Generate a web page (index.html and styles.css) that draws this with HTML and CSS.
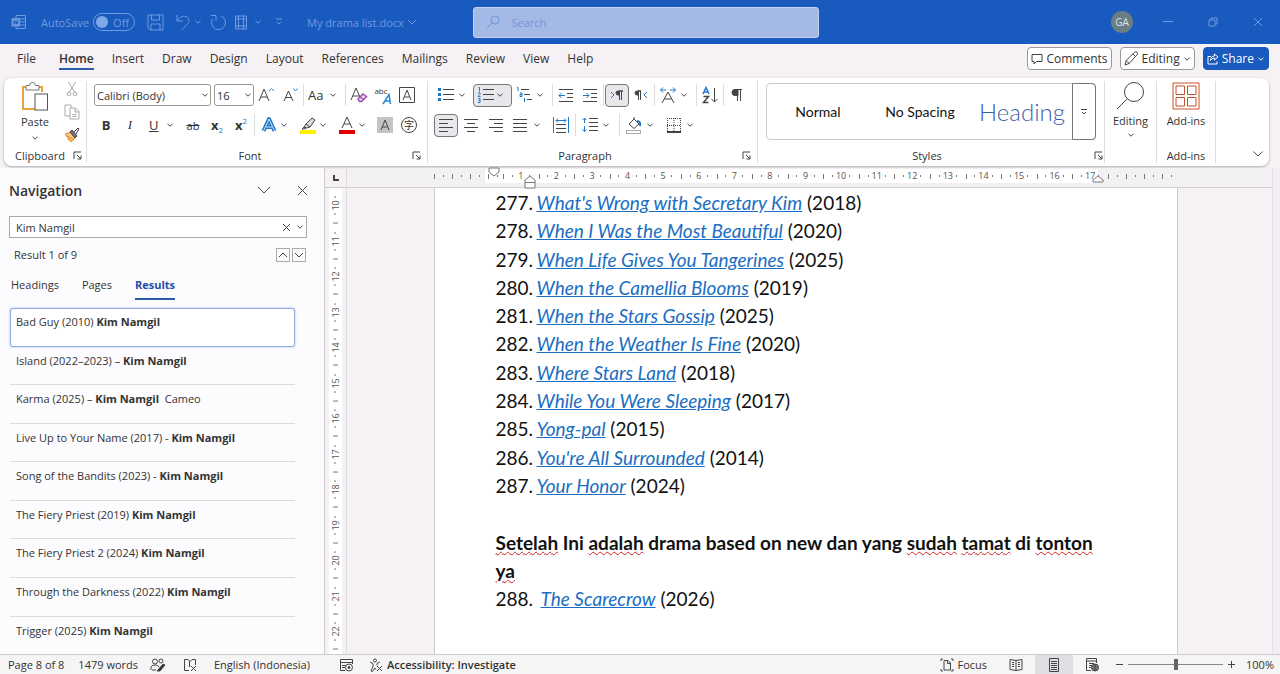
FILE: index.html
```html
<!DOCTYPE html>
<html lang="en">
  <head>
    <meta charset="UTF-8">
    <title>My drama list.docx</title>
    <link rel="stylesheet" href="styles.css">
  </head>
  <body>
    <svg class="defs" width="0" height="0">
      <symbol id="chev" viewBox="0 0 8 8"><path d="M1.5 2.8 4 5.2 6.5 2.8"/></symbol>
      <symbol id="launch" viewBox="0 0 9 9"><path d="M1 8V1h7M4 4l4 4M8 4.500V8H4.500"/></symbol>
    </svg>

    <header class="titlebar">
      <div class="quick">
        <svg class="word" width="16" height="16" viewBox="0 0 16 16"><path d="M5 4V1.500h9.500v13H5V12M5 5h9.500M9 8h5.500M9 11h5.500"/><rect x="1" y="4.500" width="7.500" height="7.500" fill="#6593dc"/><path d="M2.500 6.500l1 3.500 1.200-3 1.200 3 1-3.500" stroke="#185abd"/></svg>
        <label class="autosave">AutoSave
          <span class="toggle"><input type="checkbox"><span>Off</span></span>
        </label>
        <button class="tb save" aria-label="Save"><svg width="17" height="17" viewBox="0 0 17 17"><path d="M1 1h15v15H3l-2-2zM4.500 1v5h8V1M4 16v-6h9v6"/></svg></button>
        <button class="tb undo" aria-label="Undo"><svg width="16" height="17" viewBox="0 0 16 17"><path d="M2 1v6h6M2.500 6.500C5 3 8 1.500 11 2.500s4 4.500 2 7L6.500 16"/></svg><svg class="chev"><use href="#chev"/></svg></button>
        <button class="tb redo" aria-label="Repeat"><svg width="17" height="17" viewBox="0 0 17 17"><path d="M1 1.500h5v5M11 2a7 7 0 1 1-8.500 3"/></svg></button>
        <button class="tb table" aria-label="Table"><svg width="14" height="17" viewBox="0 0 14 17"><path d="M1.500 2h11v13h-11zM4.500 2v13M9.500 2v13M1.500 5h11M1.500 12h11"/></svg><svg class="chev"><use href="#chev"/></svg></button>
        <button class="tb custom" aria-label="Customize toolbar"><svg width="8" height="8" viewBox="0 0 8 8"><path d="M1 1h6M2 4l2 2 2-2"/></svg></button>
        <button class="tb filename">My drama list.docx<svg width="10" height="8" viewBox="0 0 10 8"><path d="M1 2l4 4 4-4"/></svg></button>
      </div>
      <label class="search">
        <svg width="14" height="14" viewBox="0 0 14 14"><circle cx="9" cy="5" r="4"/><path d="M6 8l-5 5"/></svg>
        <input type="text" placeholder="Search" aria-label="Search">
      </label>
      <div class="window">
        <button class="avatar">GA</button>
        <button class="tb" aria-label="Minimize"><svg width="10" height="10" viewBox="0 0 10 10"><path d="M0 4.500h10"/></svg></button>
        <button class="tb" aria-label="Restore"><svg width="10" height="10" viewBox="0 0 10 10"><path d="M1 3h6v6H1zM3 3V1h6v6H7"/></svg></button>
        <button class="tb" aria-label="Close"><svg width="10" height="10" viewBox="0 0 10 10"><path d="M1 1l8 8M9 1l-8 8"/></svg></button>
      </div>
    </header>

    <nav class="tabs">
      <a href="#" class="file">File</a>
      <a href="#" class="current">Home</a>
      <a href="#">Insert</a>
      <a href="#">Draw</a>
      <a href="#">Design</a>
      <a href="#">Layout</a>
      <a href="#">References</a>
      <a href="#">Mailings</a>
      <a href="#">Review</a>
      <a href="#">View</a>
      <a href="#">Help</a>
      <div class="actions">
        <button><svg width="12" height="12" viewBox="0 0 12 12"><path d="M1 1.500h10v7H5.500L3 11V8.500H1z"/></svg>Comments</button>
        <button><svg width="15" height="15" viewBox="0 0 15 15"><path d="M1 14l1.200-4.500L10.500 1.200q1.500-1 2.500 0t.2 2.500L5 12.500zM9 3l3 3M2.200 9.500l3 3"/></svg>Editing<svg class="chev"><use href="#chev"/></svg></button>
        <button class="share"><svg width="12" height="12" viewBox="0 0 12 12"><path d="M4 3.500H1V11h9V8.500M7.500 1l3.500 3-3.500 3V5Q5 5 3.500 7.500 4 3 7.500 3z"/></svg>Share<svg class="chev"><use href="#chev"/></svg></button>
      </div>
    </nav>

    <section class="ribbon">
      <div class="group clipboard">
        <div class="clip">
          <button class="paste">
            <svg width="28" height="30" viewBox="0 0 28 30"><path d="M5 5H2v22h12M17 5h4v5" stroke="#e8a33d" stroke-width="2"/><path d="M5 3.500h3.500a3 3 0 0 1 6 0H18V8H5z" fill="#fff" stroke="#777"/><rect x="14" y="12" width="12.500" height="16" fill="#fff" stroke="#555"/></svg>
            Paste
            <svg class="chev"><use href="#chev"/></svg>
          </button>
          <div class="clip-tools">
            <button aria-label="Cut"><svg class="faded" width="16" height="16" viewBox="0 0 16 16"><path d="M4.500 1l6 10M11.500 1l-6 10"/><circle cx="5" cy="13" r="1.800"/><circle cx="11" cy="13" r="1.800"/></svg></button>
            <button aria-label="Copy"><svg class="faded" width="16" height="16" viewBox="0 0 16 16"><path d="M6 12H1V1h6v3M6 4h5.500L15 7.500V15H6zM11 4v4h4M8.500 10.500h4M8.500 12.500h4"/></svg></button>
            <button aria-label="Format painter"><svg width="16" height="16" viewBox="0 0 16 16"><path d="M1 7l6-2 4 6-4 4z" fill="#f7c98a" stroke="#e08a1e"/><path d="M6 5l5 6 2-2-5-6z" fill="#777"/><path d="M10 5l4-4 1 1-3 5"/><path d="M3 9l6 3M3.500 12l3 1" stroke="#e08a1e"/></svg></button>
          </div>
        </div>
        <footer><span>Clipboard</span><button class="launch" aria-label="Clipboard options"><svg><use href="#launch"/></svg></button></footer>
      </div>

      <div class="group font">
        <div class="row">
          <span class="combo family"><select aria-label="Font"><option>Calibri (Body)</option></select><svg class="chev"><use href="#chev"/></svg></span>
          <span class="combo size"><select aria-label="Font size"><option>16</option></select><svg class="chev"><use href="#chev"/></svg></span>
          <button class="icon" aria-label="Increase font size"><svg width="20" height="20" viewBox="0 0 20 20"><path d="M3 16L8 4l5 12M5 12h6"/><path d="M13 6l2.500-2.500L18 6" stroke="#2b88d0"/></svg></button>
          <button class="icon" aria-label="Decrease font size"><svg width="20" height="20" viewBox="0 0 20 20"><path d="M4 16L8.500 6 13 16M5.500 12.500h6"/><path d="M13.500 3.500L15.500 6l2-2.500" stroke="#2b88d0"/></svg></button>
          <i class="sep"></i>
          <button class="drop case" aria-label="Change case"><span>Aa</span><svg class="chev"><use href="#chev"/></svg></button>
          <i class="sep"></i>
          <button class="icon" aria-label="Clear formatting"><svg width="20" height="20" viewBox="0 0 20 20"><path d="M2 15L7 3l4 9M4 11h6"/><path d="M9 14l5-5 3.500 2.500-5 5H10.500zM11 12l3.500 2.500" fill="#f0dcf5" stroke="#9b4fb5" stroke-width="1.500"/></svg></button>
          <button class="icon phonetic" aria-label="Phonetic guide"><span>abc</span><svg width="10" height="12" viewBox="0 0 10 12"><path d="M1 11L7 1.500 8.500 11M3.500 8H8" stroke="#2b88d0" stroke-width="1.500"/></svg></button>
          <button class="icon" aria-label="Character border"><svg width="18" height="18" viewBox="0 0 18 18"><path d="M1.500 1.500h15v15h-15zM5 14L9 4l4 10M6.500 11h5"/></svg></button>
        </div>
        <div class="row">
          <button class="icon"><b>B</b></button>
          <button class="icon serif"><em>I</em></button>
          <button class="drop"><u>U</u><svg class="chev"><use href="#chev"/></svg></button>
          <button class="icon strike"><s>ab</s></button>
          <button class="icon script"><b>x</b><sub>2</sub></button>
          <button class="icon script"><b>x</b><sup>2</sup></button>
          <i class="sep"></i>
          <button class="drop" aria-label="Text effects"><svg width="20" height="20" viewBox="0 0 20 20" stroke-linejoin="round"><path d="M4.500 16L10 4l5.500 12M7 12h6" stroke="#1f78c8" stroke-width="4"/><path d="M4.500 16L10 4l5.500 12M7 12h6" stroke="#cfe6fa"/></svg><svg class="chev"><use href="#chev"/></svg></button>
          <button class="drop" aria-label="Highlight color"><svg width="20" height="20" viewBox="0 0 20 20"><path d="M6 12l2-3 6-6 3 2-5 7-3 1zM8 9l4 3M4 14l2-2 2 1-1 1z" fill="#ddd"/><path d="M2 17h16" stroke="#fff000" stroke-width="4"/></svg><svg class="chev"><use href="#chev"/></svg></button>
          <button class="drop" aria-label="Font color"><svg width="20" height="20" viewBox="0 0 20 20"><path d="M5 13L10 2l5 11M7 9h6"/><path d="M2 17h16" stroke="#e00000" stroke-width="4"/></svg><svg class="chev"><use href="#chev"/></svg></button>
          <button class="icon" aria-label="Character shading"><svg width="16" height="16" viewBox="0 0 16 16"><path d="M0 0h16v16H0z" fill="#c4c4c4" stroke="none"/><path d="M4 13L8 3l4 10M5.500 10h5"/></svg></button>
          <button class="icon enclose"><span>字</span></button>
        </div>
        <footer><span>Font</span><button class="launch" aria-label="Font options"><svg><use href="#launch"/></svg></button></footer>
      </div>

      <div class="group paragraph">
        <div class="row">
          <button class="drop" aria-label="Bullets"><svg width="18" height="18" viewBox="0 0 18 18"><path d="M6 3.500h11M6 8.500h11M6 13.500h11"/><path d="M1 3.500h3M1 8.500h3M1 13.500h3" stroke="#1f78c8" stroke-width="3"/></svg><svg class="chev"><use href="#chev"/></svg></button>
          <button class="drop on" aria-label="Numbering"><svg width="18" height="18" viewBox="0 0 18 18"><path d="M6 3.500h11M6 8.500h11M6 13.500h11"/><path d="M1.500 1.500h1v4M1 7h2v1.500L1 10.500h2.500M1 12.500h2v4H1M1.500 14.500H3" stroke="#1f78c8"/></svg><svg class="chev"><use href="#chev"/></svg></button>
          <button class="drop" aria-label="Multilevel list"><svg width="18" height="18" viewBox="0 0 18 18"><path d="M6 3.500h8M9 8.500h6M12 13.500h5"/><path d="M2 1.500h1v3.500M5 7h2v3.500H5V8.500h2M9.500 12v4" stroke="#1f78c8"/></svg><svg class="chev"><use href="#chev"/></svg></button>
          <i class="sep"></i>
          <button class="icon" aria-label="Decrease indent"><svg width="16" height="16" viewBox="0 0 16 16"><path d="M1 2.500h14M9 6.500h6M9 10.500h6M1 14.500h14"/><path d="M7 8.500H1M3.500 6L1 8.500 3.500 11" stroke="#1f78c8"/></svg></button>
          <button class="icon" aria-label="Increase indent"><svg width="16" height="16" viewBox="0 0 16 16"><path d="M1 2.500h14M9 6.500h6M9 10.500h6M1 14.500h14"/><path d="M1 8.500h6M4.500 6L7 8.500 4.500 11" stroke="#1f78c8"/></svg></button>
          <i class="sep"></i>
          <button class="icon on" aria-label="Left to right"><svg width="16" height="16" viewBox="0 0 16 16"><path d="M2 5l3 3-3 3" stroke="#1f78c8"/><path d="M14 4H9a2 2 0 0 0 0 4h1V4z" fill="#444"/><path d="M10.500 4v9M12.500 4v9"/></svg></button>
          <button class="icon" aria-label="Right to left"><svg width="16" height="16" viewBox="0 0 16 16"><path d="M14 5l-3 3 3 3" stroke="#1f78c8"/><path d="M8 4H4a2 2 0 0 0 0 4h1V4z" fill="#444"/><path d="M5.500 4v9M7.500 4v9"/></svg></button>
          <i class="sep"></i>
          <button class="drop" aria-label="Character scaling"><svg width="18" height="18" viewBox="0 0 18 18"><path d="M3 17L9 6l6 11M5.500 13h7"/><path d="M1.500 4H7M4 1.500L1.500 4 4 6.500M11 4h5.500M14 1.500L16.500 4 14 6.500" stroke="#1f78c8"/></svg><svg class="chev"><use href="#chev"/></svg></button>
          <i class="sep"></i>
          <button class="icon" aria-label="Sort"><svg width="18" height="18" viewBox="0 0 18 18"><path d="M2 8l3-6.500L8 8M3 6h4" stroke="#1f78c8" stroke-width="1.500"/><path d="M2.500 10.500h5l-5 6h5" stroke-width="1.500"/><path d="M13.500 2v14M10.500 13l3 3 3-3"/></svg></button>
          <i class="sep"></i>
          <button class="icon" aria-label="Show marks"><svg width="14" height="16" viewBox="0 0 14 16"><path d="M8 2.500H5a3 3 0 0 0 0 6h3z" fill="#444"/><path d="M7.500 2v12M10.500 2v12M7 2.500h5"/></svg></button>
        </div>
        <div class="row">
          <button class="icon on" aria-label="Align left"><svg width="16" height="16" viewBox="0 0 16 16"><path d="M1 2.500h14M1 6.500h9M1 10.500h14M1 14.500h9"/></svg></button>
          <button class="icon" aria-label="Center"><svg width="16" height="16" viewBox="0 0 16 16"><path d="M1 2.500h14M4 6.500h8M1 10.500h14M4 14.500h8"/></svg></button>
          <button class="icon" aria-label="Align right"><svg width="16" height="16" viewBox="0 0 16 16"><path d="M1 2.500h14M6 6.500h9M1 10.500h14M6 14.500h9"/></svg></button>
          <button class="drop" aria-label="Justify"><svg width="16" height="16" viewBox="0 0 16 16"><path d="M1 2.500h14M1 6.500h14M1 10.500h14M1 14.500h14"/></svg><svg class="chev"><use href="#chev"/></svg></button>
          <button class="icon" aria-label="Distribute"><svg width="18" height="18" viewBox="0 0 18 18"><path d="M4 8.500h10M4 12.500h10M4 16.500h10"/><path d="M1.500 1v16M16.500 1v16M4 4.500h10M6 2.500l-2 2 2 2M12 2.500l2 2-2 2" stroke="#1f78c8"/></svg></button>
          <i class="sep"></i>
          <button class="drop" aria-label="Line spacing"><svg width="18" height="18" viewBox="0 0 18 18"><path d="M8 2.500h9M8 6.500h9M8 10.500h9M8 14.500h9"/><path d="M3.500 2v5M1.500 4l2-2 2 2M3.500 10v5M1.500 13.500l2 2 2-2" stroke="#1f78c8"/></svg><svg class="chev"><use href="#chev"/></svg></button>
          <i class="sep"></i>
          <button class="drop" aria-label="Shading"><svg width="18" height="18" viewBox="0 0 18 18"><path d="M4 8l5-5 5 5-5 4.500zM9 3V1"/><path d="M12 5q4 0 3 5" stroke="#1f78c8" stroke-width="2"/><rect class="faded" x="1.500" y="14.500" width="14" height="3"/></svg><svg class="chev"><use href="#chev"/></svg></button>
          <button class="drop" aria-label="Borders"><svg width="18" height="18" viewBox="0 0 18 18"><path d="M2 2.500h14M2.500 2v14M15.500 2v14M9 2v14M2 9.500h14" stroke-dasharray="1 1"/><path d="M2 16h14" stroke-width="2"/></svg><svg class="chev"><use href="#chev"/></svg></button>
        </div>
        <footer><span>Paragraph</span><button class="launch" aria-label="Paragraph options"><svg><use href="#launch"/></svg></button></footer>
      </div>

      <div class="group styles">
        <div class="gallery">
          <button>Normal</button>
          <button>No Spacing</button>
          <button class="heading">Heading</button>
          <button class="more" aria-label="More styles"><svg width="8" height="8" viewBox="0 0 8 8"><path d="M1 1.500h6M2 4l2 2 2-2"/></svg></button>
        </div>
        <footer><span>Styles</span><button class="launch" aria-label="Style options"><svg><use href="#launch"/></svg></button></footer>
      </div>

      <div class="group editing">
        <button class="big"><svg width="30" height="30" viewBox="0 0 30 30"><circle cx="18" cy="11" r="9.500"/><path d="M11 18L1 28"/></svg>Editing<svg class="chev"><use href="#chev"/></svg></button>
      </div>

      <div class="group addins">
        <button class="big"><svg width="30" height="30" viewBox="0 0 30 30"><path d="M2 2h26v26H2zM5 5h8.500v8.500H5zM16.500 5H25v8.500h-8.500zM5 16.500h8.500V25H5zM16.500 16.500H25V25h-8.500z"/></svg>Add-ins</button>
        <footer>Add-ins</footer>
      </div>

      <button class="collapse" aria-label="Collapse ribbon"><svg width="12" height="10" viewBox="0 0 12 10"><path d="M1.500 2.500L6 7l4.500-4.500"/></svg></button>
    </section>

    <main>
      <aside class="navigation">
        <div class="pane-title">
          <h2>Navigation</h2>
          <button aria-label="Pane options"><svg width="14" height="10" viewBox="0 0 14 10"><path d="M1 2l6 6 6-6"/></svg></button>
          <button aria-label="Close pane"><svg width="11" height="11" viewBox="0 0 11 11"><path d="M1 1l9 9M10 1l-9 9"/></svg></button>
        </div>
        <div class="find">
          <input type="text" value="Kim Namgil" aria-label="Search document">
          <button aria-label="Clear"><svg width="9" height="9" viewBox="0 0 9 9"><path d="M1 1l7 7M8 1L1 8"/></svg></button>
          <button aria-label="Search options"><svg class="chev"><use href="#chev"/></svg></button>
        </div>
        <div class="count">
          <span>Result 1 of 9</span>
          <button aria-label="Previous"><svg width="10" height="8" viewBox="0 0 10 8"><path d="M1 6l4-4 4 4"/></svg></button>
          <button aria-label="Next"><svg width="10" height="8" viewBox="0 0 10 8"><path d="M1 2l4 4 4-4"/></svg></button>
        </div>
        <div class="views">
          <a href="#">Headings</a>
          <a href="#">Pages</a>
          <a href="#" class="current">Results</a>
        </div>
        <ul class="results">
          <li class="selected">Bad Guy (2010) <b>Kim Namgil</b></li>
          <li>Island (2022–2023) – <b>Kim Namgil</b></li>
          <li>Karma (2025) – <b>Kim Namgil</b>&nbsp; Cameo</li>
          <li>Live Up to Your Name (2017) - <b>Kim Namgil</b></li>
          <li>Song of the Bandits (2023) - <b>Kim Namgil</b></li>
          <li>The Fiery Priest (2019) <b>Kim Namgil</b></li>
          <li>The Fiery Priest 2 (2024) <b>Kim Namgil</b></li>
          <li>Through the Darkness (2022) <b>Kim Namgil</b></li>
          <li>Trigger (2025) <b>Kim Namgil</b></li>
        </ul>
      </aside>

      <div class="vside">
        <div class="corner"><svg width="6" height="6" viewBox="0 0 6 6"><path d="M1 0v5h5" stroke-width="2"/></svg></div>
        <div class="vruler">
          <span>10</span><span>11</span><span>12</span><span>13</span><span>14</span><span>15</span><span>16</span><span>17</span><span>18</span><span>19</span><span>20</span><span>21</span><span>22</span>
        </div>
      </div>

      <div class="canvas">
        <div class="hruler">
          <div class="scale">
            <i class="side"></i>
            <div class="cms">
              <span>1</span><span>2</span><span>3</span><span>4</span><span>5</span><span>6</span><span>7</span><span>8</span><span>9</span><span>10</span><span>11</span><span>12</span><span>13</span><span>14</span><span>15</span><span>16</span><span>17</span>
            </div>
            <i class="side"></i>
            <svg class="marker first" width="12" height="10" viewBox="0 0 12 10"><path d="M1 1h10v4L6 9 1 5z"/></svg>
            <svg class="marker hanging" width="12" height="14" viewBox="0 0 12 14"><path d="M1 13V5l5-4 5 4v8zM1 7.500h10"/></svg>
            <svg class="marker right" width="12" height="8" viewBox="0 0 12 8"><path d="M1 7V5l5-4 5 4v2z"/></svg>
          </div>
        </div>
        <article class="page">
          <ol>
            <li><span>277.</span><a href="#">What's Wrong with Secretary Kim</a> (2018)</li>
            <li><span>278.</span><a href="#">When I Was the Most Beautiful</a> (2020)</li>
            <li><span>279.</span><a href="#">When Life Gives You Tangerines</a> (2025)</li>
            <li><span>280.</span><a href="#">When the Camellia Blooms</a> (2019)</li>
            <li><span>281.</span><a href="#">When the Stars Gossip</a> (2025)</li>
            <li><span>282.</span><a href="#">When the Weather Is Fine</a> (2020)</li>
            <li><span>283.</span><a href="#">Where Stars Land</a> (2018)</li>
            <li><span>284.</span><a href="#">While You Were Sleeping</a> (2017)</li>
            <li><span>285.</span><a href="#">Yong-pal</a> (2015)</li>
            <li><span>286.</span><a href="#">You're All Surrounded</a> (2014)</li>
            <li><span>287.</span><a href="#">Your Honor</a> (2024)</li>
          </ol>
          <br>
          <p><i>Setelah</i> Ini <i>adalah</i> drama based on new dan yang <i>sudah</i> <i>tamat</i> di <i>tonton</i> <i>ya</i></p>
          <ol class="next">
            <li><span>288.</span><a href="#">The Scarecrow</a> (2026)</li>
          </ol>
        </article>
      </div>
      <div class="scrollbar"></div>
    </main>

    <footer class="status">
      <span class="pages">Page 8 of 8</span>
      <span class="words">1479 words</span>
      <button aria-label="Editor"><svg width="16" height="14" viewBox="0 0 16 14"><circle cx="5" cy="3.500" r="2.500"/><circle cx="11" cy="3" r="2"/><path d="M1 12q-1-5 4-5 3 0 4 2M2 12h4"/><path d="M7 13l6-7 2 1-5 6z" fill="#333"/></svg></button>
      <button class="proof" aria-label="Proofing"><svg width="14" height="14" viewBox="0 0 14 14"><path d="M6 12.500H1.500v-11H5l2 2 2-2h3.500V7M6.500 3v6M8 8l5 5M13 8l-5 5"/></svg></button>
      <span class="lang">English (Indonesia)</span>
      <button class="macro" aria-label="Macro"><svg width="15" height="14" viewBox="0 0 15 14"><path d="M6 12.500H1.500v-11h12V6M1 4.500h13M3 7.500h4M3 9.500h3"/><circle cx="10" cy="9.500" r="3.500"/><circle cx="10" cy="9.500" r="1" fill="#333"/></svg></button>
      <button class="access"><svg width="15" height="14" viewBox="0 0 15 14"><circle cx="6" cy="2.500" r="1.500"/><path d="M1 4l3 1.500v3L2 13l1.500.5L6 10l1 1.500M11 4L8 5.500v2M8 8l5 5M13 8l-5 5"/></svg>Accessibility: Investigate</button>
      <div class="view">
        <button class="focus"><svg width="14" height="14" viewBox="0 0 14 14"><path d="M3 1H1v2M1 11v2h2M11 1h2v2M13 11v2h-2M4 2.500h4L10.500 5v7H4zM7.500 3v2.500h3"/></svg>Focus</button>
        <button aria-label="Read mode"><svg width="14" height="14" viewBox="0 0 14 14"><path d="M7 2.500L1 1.500v10l6 1 6-1v-10zM7 2.500v10M3 4.500h2M3 6.500h2M3 8.500h2M9 4.500h2M9 6.500h2M9 8.500h2"/></svg></button>
        <button class="on" aria-label="Print layout"><svg width="12" height="14" viewBox="0 0 12 14"><path d="M1.500.5h9v13h-9zM3 3.500h6M3 5.500h6M3 7.500h6M3 9.500h6M3 11.500h6"/></svg></button>
        <button aria-label="Web layout"><svg width="14" height="14" viewBox="0 0 14 14"><path d="M6 12.500H1.500v-12h10V5M1.500 3h10M4 5.500h5M4 7.500h3M4 9.500h2"/><circle cx="10" cy="9.500" r="3.500" fill="#777"/><path d="M10 6v7"/></svg></button>
        <button class="step" aria-label="Zoom out"><svg width="9" height="9" viewBox="0 0 9 9"><path d="M1 4.500h7"/></svg></button>
        <input type="range" min="0" max="100" value="50" aria-label="Zoom">
        <button class="step" aria-label="Zoom in"><svg width="9" height="9" viewBox="0 0 9 9"><path d="M1 4.500h7M4.500 1v7"/></svg></button>
        <span class="percent">100%</span>
      </div>
    </footer>
  </body>
</html>
```

FILE: styles.css
```css
* {
  box-sizing: border-box;
}

body {
  margin: 0;
  height: 100vh;
  display: flex;
  flex-direction: column;
  background-color: #f5f1f5;
  color: #333;
  font-family: "Open Sans", "Noto Sans", "Noto Sans CJK SC", sans-serif;
  font-size: 11px;
  overflow: hidden;
}

button, input, select {
  font: inherit;
  color: inherit;
  border: none;
  background: none;
  padding: 0;
  margin: 0;
  outline: none;
}

button {
  display: flex;
  align-items: center;
  justify-content: center;
}

a {
  color: inherit;
  text-decoration: none;
}

svg {
  fill: none;
  stroke: #444;
  flex-shrink: 0;
}

.faded {
  stroke: #aaa;
}

.defs {
  position: absolute;
}

.chev {
  width: 8px;
  height: 8px;
}

/* title bar */
.titlebar {
  height: 44px;
  display: grid;
  grid-template-columns: 1fr 346px 1fr;
  align-items: center;
  padding-left: 11px;
  background-color: #185abd;
  color: #6f9ae0;
}

.titlebar svg {
  stroke: #6f9ae0;
}

.quick, .window, .autosave {
  display: flex;
  align-items: center;
}

.autosave {
  margin-left: 14px;
  gap: 4px;
}

.toggle {
  display: grid;
  align-items: center;
}

.toggle input, .toggle span {
  grid-area: 1 / 1;
}

.toggle input {
  appearance: none;
  width: 42px;
  height: 18px;
  border: 1px solid #6f9ae0;
  border-radius: 9px;
}

.toggle input::before {
  content: "";
  display: block;
  width: 12px;
  height: 12px;
  margin: 2px;
  border-radius: 6px;
  background-color: #7fa8e8;
}

.toggle span {
  justify-self: end;
  padding-right: 6px;
}

.tb {
  gap: 3px;
}

.save {
  margin-left: 12px;
}

.undo {
  margin-left: 11px;
}

.redo {
  margin-left: 8px;
}

.table {
  margin-left: 7px;
  gap: 6px;
}

.custom {
  margin-left: 13px;
}

.filename {
  margin-left: 24px;
}

.search {
  height: 31px;
  display: flex;
  align-items: center;
  gap: 12px;
  padding-left: 12px;
  border: 1px solid #c3d0ef;
  border-radius: 3px;
  background-color: #a5b9e6;
}

.search svg {
  stroke: #7296d8;
}

.search input {
  flex: 1;
}

.search input::placeholder {
  color: #7296d8;
}

.window {
  justify-content: flex-end;
}

.window .tb {
  width: 45px;
}

.avatar {
  width: 22px;
  height: 22px;
  margin-right: 12px;
  border-radius: 11px;
  background-color: #6a7d83;
  color: #dde3ea;
  font-size: 10px;
}

/* ribbon tabs */
.tabs {
  height: 34px;
  display: flex;
  align-items: flex-start;
  gap: 18px;
  padding: 2px 11px 0 17px;
  font-size: 12px;
}

.tabs a {
  height: 24px;
  line-height: 25px;
}

.tabs .file {
  margin-right: 5px;
}

.tabs .current {
  font-weight: 600;
  border-bottom: 2px solid #2a5ca8;
}

.actions {
  display: flex;
  gap: 8px;
  margin-left: auto;
}

.actions button {
  height: 23px;
  margin-top: 1px;
  gap: 3px;
  padding: 0 3px;
  border: 1px solid #999;
  border-radius: 4px;
  background-color: #fff;
}

.actions .share {
  border-color: #185abd;
  background-color: #185abd;
  color: #fff;
}

.share svg {
  stroke: #fff;
}

/* ribbon */
.ribbon {
  display: flex;
  height: 88px;
  margin: 0 11px 0 4px;
  border-radius: 8px;
  background-color: #fff;
  box-shadow: 0 1px 3px rgba(0,0,0,0.3);
}

.group {
  display: flex;
  flex-direction: column;
  flex-shrink: 0;
  gap: 6px;
  margin: 3px 0;
  padding: 2px 6px 0;
  border-right: 1px solid #ddd;
}

.group footer {
  display: flex;
  align-items: center;
  justify-content: center;
  height: 16px;
  margin-top: auto;
}

.group footer span {
  flex: 1;
  padding-right: 6px;
  text-align: center;
}

.launch svg {
  width: 9px;
  height: 9px;
}

.clipboard {
  width: 83px;
  gap: 0;
  padding: 0 4px 0 11px;
}

.clipboard footer span {
  padding: 0;
  text-align: left;
}

.font {
  width: 341px;
  padding-left: 7px;
}

.paragraph {
  width: 330px;
}

.clip {
  display: flex;
  gap: 9px;
}

.paste {
  flex-direction: column;
  width: 40px;
  gap: 2px;
}

.paste .chev {
  margin-top: 3px;
}

.clip-tools {
  display: flex;
  flex-direction: column;
  gap: 7px;
}

.row {
  display: flex;
  align-items: center;
  height: 24px;
}

.paragraph .row:nth-child(2) {
  gap: 1px;
}

.icon {
  width: 24px;
  height: 23px;
}

.drop {
  width: 39px;
  height: 23px;
  justify-content: space-between;
  padding: 0 7px 0 3px;
}

.on {
  border: 1px solid #777;
  border-radius: 4px;
  background-color: #e8e8ec;
}

.sep {
  width: 1px;
  height: 22px;
  margin: 0 1px;
  background-color: #ddd;
}

.combo {
  display: grid;
  align-items: center;
  height: 22px;
  border: 1px solid #999;
  border-radius: 3px;
}

.combo select, .combo svg {
  grid-area: 1 / 1;
}

.combo select {
  appearance: none;
  width: 100%;
  padding-left: 2px;
}

.combo svg {
  justify-self: end;
  margin-right: 1px;
  pointer-events: none;
}

.family {
  width: 117px;
  margin-right: 3px;
}

.size {
  width: 40px;
}

.case {
  font-size: 13px;
}

.row b, .row em, .row u {
  font-size: 13px;
}

.row u {
  padding-left: 4px;
}

.serif {
  font-family: "Liberation Serif", serif;
}

.phonetic {
  align-items: flex-start;
  padding-top: 2px;
  font-size: 8px;
  line-height: 10px;
}

.phonetic svg {
  margin: 7px 0 0 -6px;
}

.script sub, .script sup {
  color: #1f78c8;
  font-size: 8px;
  line-height: 8px;
}

.script sub {
  align-self: flex-end;
  padding-bottom: 3px;
}

.script sup {
  align-self: flex-start;
  padding-top: 3px;
}

.enclose span {
  width: 16px;
  height: 16px;
  border: 1px solid #444;
  border-radius: 8px;
  font-size: 10px;
  line-height: 14px;
}

.styles {
  width: 347px;
  padding: 2px 1px 0 8px;
}

.gallery {
  display: grid;
  grid-template-columns: 102px 102px 1fr 22px;
  height: 57px;
  margin-right: 7px;
  border: 1px solid #ccc;
  border-radius: 4px;
  color: #111;
  font-family: Lato, sans-serif;
  font-size: 14px;
}

.gallery .heading {
  color: #3f60a8;
  font-size: 24px;
  font-weight: 300;
}

.gallery .more {
  margin: -1px;
  border: 1px solid #777;
  border-radius: 0 4px 4px 0;
}

.editing {
  width: 52px;
  padding: 0;
}

.addins {
  width: 59px;
  padding: 0;
}

.addins svg {
  stroke: #c8512b;
}

.big {
  flex-direction: column;
  gap: 2px;
}

.big .chev {
  margin-top: 1px;
}

.collapse {
  align-self: flex-end;
  margin: 0 5px 7px auto;
}

/* work area */
main {
  flex: 1;
  min-height: 0;
  display: flex;
  margin-top: 2px;
}

.navigation {
  display: flex;
  flex-direction: column;
  width: 325px;
  border-right: 1px solid #ccc;
  background-color: #fcfbfe;
}

.pane-title {
  display: flex;
  align-items: center;
  gap: 26px;
  height: 46px;
  padding: 0 16px 2px 9px;
}

.pane-title h2 {
  flex: 1;
  margin: 0;
  font-size: 14px;
  font-weight: 600;
}

.find {
  display: flex;
  align-items: center;
  gap: 5px;
  height: 22px;
  margin: 2px 17px 0 9px;
  padding: 0 2px 0 6px;
  border: 1px solid #aaa;
  background-color: #fff;
}

.find input {
  flex: 1;
}

.count {
  display: flex;
  align-items: center;
  gap: 2px;
  height: 33px;
  padding: 0 18px 0 14px;
}

.count span {
  flex: 1;
}

.count button {
  width: 14px;
  height: 14px;
  border: 1px solid #aaa;
}

.views {
  display: flex;
  gap: 23px;
  height: 37px;
  padding-left: 11px;
}

.views a {
  height: 29px;
  padding-top: 6px;
}

.views .current {
  color: #1f4fa8;
  font-weight: 700;
  border-bottom: 2px solid #2a5ca8;
}

.results {
  flex: 1;
  display: flex;
  flex-direction: column;
  margin: 0 29px 0 10px;
  padding: 0;
  list-style: none;
}

.results li {
  flex: 1;
  padding: 6px 6px 0;
  border-bottom: 1px solid #ddd;
}

.results .selected {
  padding: 5px 5px 0;
  border: 1px solid #8fabdf;
  border-radius: 3px;
  background-color: #fff;
  box-shadow: 0 0 2px #8fabdf;
}

.results li:last-child {
  border-bottom: none;
}

.vside {
  display: flex;
  flex-direction: column;
  width: 22px;
  border-right: 1px solid #ddd;
}

.corner {
  display: flex;
  align-items: center;
  justify-content: center;
  height: 20px;
  border-bottom: 1px solid #ccc;
}

.vruler {
  flex: 1;
  display: grid;
  grid-auto-rows: 1fr;
  margin: 0 4px;
  padding-bottom: 4px;
  background-color: #fff;
  color: #555;
  font-size: 9px;
}

.vruler span {
  display: flex;
  align-items: center;
  justify-content: center;
  writing-mode: vertical-rl;
  transform: rotate(180deg);
  background:
    linear-gradient(#777, #777) 50% 0 / 5px 1px no-repeat,
    linear-gradient(#777, #777) 50% 25% / 2px 1px no-repeat,
    linear-gradient(#777, #777) 50% 75% / 2px 1px no-repeat;
}

.canvas {
  flex: 1;
  display: flex;
  flex-direction: column;
  align-items: center;
  padding-right: 8px;
}

.hruler {
  display: flex;
  justify-content: center;
  align-self: stretch;
  height: 20px;
  margin-right: -8px;
  padding-right: 8px;
  border-bottom: 1px solid #d5d2d6;
  background-color: #f2f0f3;
  color: #555;
  font-size: 9px;
}

.scale {
  position: relative;
  display: flex;
  width: 744px;
  height: 14px;
  margin-top: 1px;
  background: linear-gradient(90deg, transparent 51px, #fff 51px, #fff 664px, transparent 664px);
}

.side {
  flex: 1;
  background:
    linear-gradient(90deg, #777 1px, transparent 1px) 0 50% / 18px 5px repeat-x,
    linear-gradient(90deg, #777 1px, transparent 1px) 9px 50% / 18px 2px repeat-x;
}

.cms {
  display: grid;
  grid-template-columns: repeat(17, 1fr);
  width: 605px;
}

.cms span {
  line-height: 14px;
  text-align: center;
  background:
    linear-gradient(#777, #777) 0 50% / 1px 5px no-repeat,
    linear-gradient(#777, #777) 25% 50% / 1px 2px no-repeat,
    linear-gradient(#777, #777) 75% 50% / 1px 2px no-repeat;
}

.marker {
  position: absolute;
  fill: #fff;
  stroke: #777;
}

.first {
  left: 54px;
  top: -2px;
}

.hanging {
  left: 90px;
  top: 6px;
}

.right {
  left: 658px;
  top: 6px;
}

.page {
  flex: 1;
  width: 744px;
  padding: 1px 80px 0 61px;
  border: 1px solid #ccc;
  border-width: 0 1px;
  background-color: #fff;
  color: #111;
  font-family: Lato, sans-serif;
  font-size: 19px;
  line-height: 1.49;
}

.page ol {
  margin: 0;
  padding: 0;
  list-style: none;
}

.page li span {
  display: inline-block;
  width: 41px;
}

.page .next span {
  width: 45px;
}

.page a {
  color: #1b6ec2;
  font-style: italic;
  text-decoration: underline;
}

.page p {
  margin: 0;
  font-weight: 700;
}

.page i {
  font-style: normal;
  text-decoration: underline wavy #d02020 1px;
}

.scrollbar {
  width: 8px;
  border-left: 1px solid #e4e0e5;
  background-color: #f1eff3;
}

/* status bar */
.status {
  display: flex;
  align-items: center;
  height: 20px;
  padding-left: 8px;
  border-top: 1px solid #ccc;
  background-color: #f5f5f5;
}

.words {
  margin: 0 12px 0 14px;
}

.proof {
  margin: 0 17px;
}

.macro {
  margin: 0 15px 0 29px;
}

.access {
  gap: 3px;
  font-weight: 600;
}

.view {
  display: flex;
  align-items: center;
  margin-left: auto;
}

.view button {
  width: 38px;
  height: 19px;
}

.view .on {
  border: none;
  border-radius: 0;
  background-color: #e0dee2;
}

.view .focus {
  width: auto;
  gap: 3px;
  margin-right: 10px;
}

.view .step {
  width: 17px;
}

.view input {
  appearance: none;
  width: 95px;
  height: 1px;
  background-color: #888;
}

.view input::-webkit-slider-thumb {
  appearance: none;
  width: 4px;
  height: 11px;
  background-color: #666;
}

.percent {
  margin: 0 6px;
}
```
